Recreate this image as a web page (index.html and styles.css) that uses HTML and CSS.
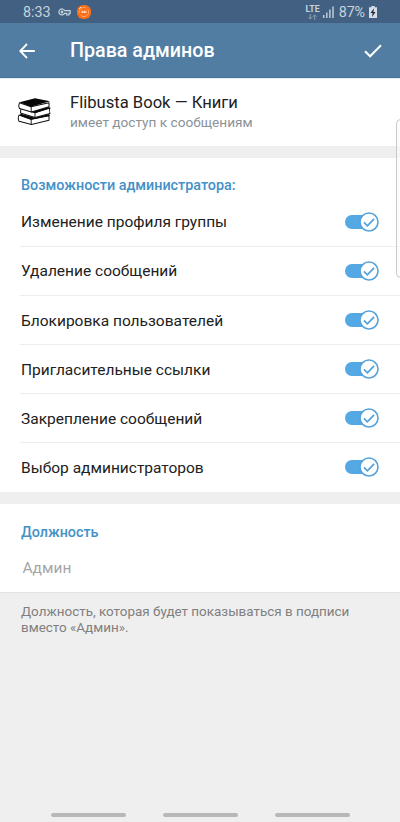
FILE: index.html
```html
<!DOCTYPE html>
<html lang="ru">
<head>
<meta charset="utf-8">
<title>Права админов</title>
<link rel="stylesheet" href="styles.css">
</head>
<body>
<svg class="defs" width="0" height="0" aria-hidden="true">
  <symbol id="switch" viewBox="0 0 34 20">
    <rect x="0" y="3.1" width="28" height="13.8" rx="6.9" fill="#54a8e4"/>
    <circle cx="24" cy="10" r="9" fill="#fff" stroke="#54a3dc" stroke-width="1.6"/>
    <path d="M18.9 10.4l3.5 3.4 6.7-7" fill="none" stroke="#54a3dc" stroke-width="1.8"/>
  </symbol>
</svg>
<div class="screen">
  <div class="status">
    <span class="time">8:33</span>
    <svg class="key" width="13" height="8" viewBox="0 0 13 8" fill="none" stroke="#c6d3df" stroke-width="1.2">
      <path d="M6.6 2.6A3 3 0 1 0 6.6 5.3H8.7V7H11V5.3H12.1V2.6Z"/><circle cx="4" cy="4" r=".8"/>
    </svg>
    <svg class="app" width="14" height="14" viewBox="0 0 14 14">
      <rect width="14" height="14" rx="6" fill="#f96e16"/>
      <circle cx="7" cy="7" r="4.7" fill="none" stroke="#ffb27f" stroke-width=".8" stroke-dasharray="11 2"/>
      <path d="M4.5 6.3h5M4.5 7.5h5" stroke="#ffe2cf" stroke-width="1" stroke-dasharray="1.6 .3"/>
      <path d="M2 4l2-2" stroke="#ffe2cf"/>
    </svg>
    <span class="net"><span class="lte">LTE</span>
      <svg width="9" height="6" viewBox="0 0 9 6" fill="none" stroke="#8ca1b5" stroke-width="1"><path d="M2.3 0v5M.5 3.2l1.8 1.9 1.8-1.9M6.7 6V1M4.9 2.8L6.7.9l1.8 1.9"/></svg>
    </span>
    <svg class="signal" width="12" height="12" viewBox="0 0 12 12" fill="#c6d3df"><path d="M0 9h1.4v3H0zM3.1 6.5h1.4V12H3.1zM6.2 3.5h1.4V12H6.2zM9.3 .5h1.4V12H9.3z"/></svg>
    <span class="percent">87%</span>
    <svg class="battery" width="8" height="12" viewBox="0 0 8 12"><path d="M2.4 0h3.2v1.3H8V12H0V1.3h2.4z" fill="#d5dee7"/><path d="M5 2.3L1.5 7h2.1L3 11l3.5-5H4.4z" fill="#1d2c3a"/></svg>
  </div>
  <header class="bar">
    <svg class="back" width="16" height="16" viewBox="0 0 16 16" fill="none" stroke="#fff" stroke-width="1.8"><path d="M15.8 8H1.3M8 1L1.2 8 8 15"/></svg>
    <h1>Права админов</h1>
    <svg class="done" width="18" height="14" viewBox="0 0 18 14" fill="none" stroke="#fff" stroke-width="2"><path d="M1 7.3l5.1 5L17 1.2"/></svg>
  </header>
  <section class="profile">
    <svg class="books" width="34" height="29" viewBox="0 0 34 28" preserveAspectRatio="none" stroke-linejoin="round" stroke-linecap="round">
      <g fill="#fff" stroke="#111" stroke-width="1">
        <path d="M2 17.5L14 21.5 32 18V22.5L14.5 26.6 2 23.3Q.5 20.5 2 17.5Z"/>
        <path d="M4 10.5L18 15 33 10.5Q31.5 13 33 16L18 19.7 3.5 15.5Z"/>
        <path d="M2.5 5.5L14 9.5 32 5.5V9.5L14.5 14.5 2.5 11Q1 8.5 2.5 5.5Z"/>
      </g>
      <g fill="#080808">
        <path d="M2.5 5L18 1.3 33 4 14 9.5Z"/>
        <path d="M4 11.5L14.5 14.5 32 9.7 33 11 18 15.7Z"/>
        <path d="M2 17.5L4 16.2 18 20 32 16.5 33 18 14 22Z"/>
      </g>
      <path d="M14.2 9v5.5M18 15v4.7M14.2 21.5v5" fill="none" stroke="#111" stroke-width=".9"/>
    </svg>
    <div class="who">
      <div class="name">Flibusta Book — Книги</div>
      <div class="access">имеет доступ к сообщениям</div>
    </div>
  </section>
  <section class="rights">
    <h2>Возможности администратора:</h2>
    <div class="row"><span>Изменение профиля группы</span><svg width="34" height="20"><use href="#switch"/></svg></div>
    <div class="row"><span>Удаление сообщений</span><svg width="34" height="20"><use href="#switch"/></svg></div>
    <div class="row"><span>Блокировка пользователей</span><svg width="34" height="20"><use href="#switch"/></svg></div>
    <div class="row"><span>Пригласительные ссылки</span><svg width="34" height="20"><use href="#switch"/></svg></div>
    <div class="row"><span>Закрепление сообщений</span><svg width="34" height="20"><use href="#switch"/></svg></div>
    <div class="row"><span>Выбор администраторов</span><svg width="34" height="20"><use href="#switch"/></svg></div>
  </section>
  <section class="rank">
    <h2>Должность</h2>
    <div class="field">Админ</div>
  </section>
  <p class="hint">Должность, которая будет показываться в подписи<br>вместо «Админ».</p>
  <div class="nav"><i></i><i></i><i></i></div>
  <div class="edge"></div>
</div>
</body>
</html>
```
FILE: styles.css
```css
* { box-sizing: border-box; }
body { margin: 0; font-family: Roboto, "Liberation Sans", sans-serif; }
h1, h2, p { margin: 0; font-weight: 500; }
svg { flex: none; display: block; }
.defs { position: absolute; }
.screen {
  position: relative;
  display: flex;
  flex-direction: column;
  width: 400px;
  height: 822px;
  overflow: hidden;
  background: #efefef;
}
.status {
  display: flex;
  align-items: center;
  height: 23px;
  padding: 1px 23px 0;
  background: #426182;
  color: #c6d3df;
  font-size: 14.3px;
}
.time { width: 35px; }
.app { margin-left: 5.5px; }
.net { display: flex; flex-direction: column; align-items: center; margin-left: auto; }
.lte { font-size: 8.8px; line-height: 9px; font-weight: 700; }
.signal { margin-left: 3px; }
.percent { margin-left: 4px; letter-spacing: -0.1px; }
.battery { margin-left: 4px; }
.bar {
  display: flex;
  align-items: center;
  height: 55px;
  padding: 1px 18px 0 19px;
  background: #517da2;
  border-bottom: 1px solid #4a7499;
  color: #fff;
}
.bar h1 { margin-left: 35px; font-size: 19.7px; line-height: 24px; }
.done { margin-left: auto; }
.profile {
  display: flex;
  align-items: center;
  height: 68px;
  padding: 0 17px;
  background: #fff;
  border-top: 1px solid #e1ebf4;
}
.books { margin-bottom: 2px; }
.who { margin-left: 19px; }
.name { color: #212121; font-size: 16.6px; line-height: 20px; }
.access { color: #8a9299; font-size: 13.65px; line-height: 19px; }
.rights {
  height: 334px;
  margin-top: 12px;
  padding-top: 17px;
  background: #fff;
}
h2 { padding-left: 21px; color: #4491c7; font-size: 14.35px; line-height: 22px; }
.rights h2 { margin-bottom: .7px; }
.row {
  display: flex;
  align-items: center;
  justify-content: space-between;
  height: 49.15px;
  margin-left: 20px;
  padding: 0 21px 0 1px;
  border-bottom: 1px solid #ededed;
  color: #212121;
  font-size: 15.5px;
}
.row span { padding-top: 1px; }
.row:last-child { border-bottom-color: transparent; }
.rank {
  height: 89px;
  margin-top: 12px;
  padding-top: 18px;
  background: #fff;
  border-bottom: 1px solid #e2e2e2;
}
.field { margin: 13px 0 0 22.5px; color: #a6a6a6; font-size: 15.5px; line-height: 22px; }
.hint { padding: 11px 21px 0; color: #808080; font-size: 13.45px; line-height: 16px; font-weight: 400; }
.nav { display: flex; justify-content: center; gap: 37px; margin-top: auto; padding-bottom: 5px; }
.nav i { width: 75px; height: 4px; border-radius: 2px; background: #b7b7b7; }
.edge {
  position: absolute;
  top: 119px;
  right: -5px;
  width: 9px;
  height: 159px;
  border: 1px solid #c9c9c9;
  border-radius: 5px;
  background: rgba(250, 250, 250, .6);
}
```
